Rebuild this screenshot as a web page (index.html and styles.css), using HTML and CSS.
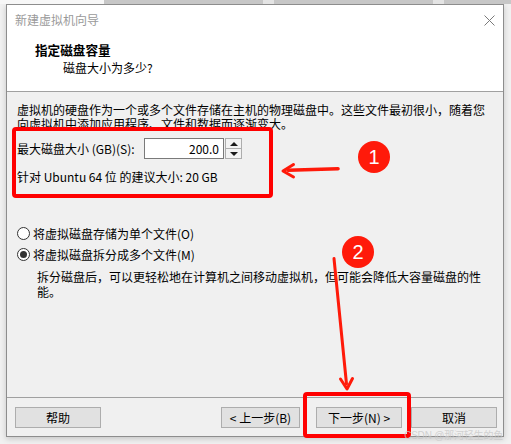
FILE: index.html
```html
<!DOCTYPE html>
<html lang="zh-CN">
<head>
<meta charset="utf-8">
<title>新建虚拟机向导</title>
<link rel="stylesheet" href="styles.css">
</head>
<body>
<div class="desktop">
  <span class="seg seg-white"></span>
  <span class="seg seg-gray w159"></span>
  <span class="seg seg-light"></span>
  <span class="seg seg-gray w159"></span>
  <span class="seg seg-light"></span>
  <span class="seg seg-gray grow"></span>
</div>
<div class="window">
  <div class="titlebar">
    <span class="title">新建虚拟机向导</span>
    <svg class="close" width="11" height="11" viewBox="0 0 11 11"><path d="M0.5 0.5L10.5 10.5M10.5 0.5L0.5 10.5" stroke="#7a7a7a" stroke-width="1" fill="none"/></svg>
  </div>
  <div class="header">
    <div class="h-title">指定磁盘容量</div>
    <div class="h-sub">磁盘大小为多少?</div>
  </div>
  <div class="content">
    <div class="intro">
      <div class="line">虚拟机的硬盘作为一个或多个文件存储在主机的物理磁盘中。这些文件最初很小，随着您</div>
      <div class="line">向虚拟机中添加应用程序、文件和数据而逐渐变大。</div>
    </div>
    <div class="size-row">
      <span class="size-label">最大磁盘大小 (GB)(S):</span>
      <div class="spin-field">200.0</div>
      <div class="spin-btns">
        <span class="spin-btn"><span class="tri-up"></span></span>
        <span class="spin-btn"><span class="tri-down"></span></span>
      </div>
    </div>
    <div class="recommend">针对 Ubuntu 64 位 的建议大小: 20 GB</div>
    <div class="radio-group">
      <div class="radio"><span class="radio-circle"></span><span>将虚拟磁盘存储为单个文件(O)</span></div>
      <div class="radio second"><span class="radio-circle checked"></span><span>将虚拟磁盘拆分成多个文件(M)</span></div>
      <div class="radio-desc">
        <div class="line2">拆分磁盘后，可以更轻松地在计算机之间移动虚拟机，但可能会降低大容量磁盘的性</div>
        <div class="line2">能。</div>
      </div>
    </div>
  </div>
  <div class="footer">
    <button class="btn btn-help">帮助</button>
    <button class="btn btn-back">&lt; 上一步(B)</button>
    <button class="btn btn-next">下一步(N) &gt;</button>
    <button class="btn btn-cancel">取消</button>
  </div>
</div>
<svg class="annot" width="511" height="444" viewBox="0 0 511 444">
  <rect x="14" y="129" width="257" height="67" rx="2" fill="none" stroke="#ff0000" stroke-width="4"/>
  <rect x="305" y="394" width="104" height="42" rx="2" fill="none" stroke="#ff0000" stroke-width="4"/>
  <path d="M338 168.8L288 170.3" stroke="#ff1a0a" stroke-width="3.6" stroke-linecap="round" fill="none"/>
  <path d="M293.5 164.5L283 171L293.5 177" stroke="#ff1a0a" stroke-width="3" stroke-linecap="round" stroke-linejoin="round" fill="none"/>
  <path d="M334 258.5L346.5 384" stroke="#ff1a0a" stroke-width="3" stroke-linecap="round" fill="none"/>
  <path d="M340.5 379L347 389L352.5 378.5" stroke="#ff1a0a" stroke-width="3" stroke-linecap="round" stroke-linejoin="round" fill="none"/>
  <circle cx="374" cy="157" r="16" fill="#ff1a0a"/>
  <text x="374" y="164" class="num">1</text>
  <circle cx="358" cy="252" r="16" fill="#ff1a0a"/>
  <text x="358" y="259" class="num">2</text>
</svg>
<div class="watermark">CSDN @那河轻生的鱼</div>
</body>
</html>
```
FILE: styles.css
```css
* { box-sizing: border-box; }
html, body { margin: 0; padding: 0; }
body {
  position: relative;
  width: 511px;
  height: 444px;
  overflow: hidden;
  background: #f1f1f1;
  font-family: "Noto Sans CJK SC", "Noto Sans", sans-serif;
  font-size: 12px;
  color: #000;
}
.desktop { display: flex; height: 4px; }
.seg { display: block; height: 4px; }
.seg-white { width: 104px; background: #f7f7f7; }
.seg-gray { background: #c7c7c7; }
.seg-light { width: 11px; background: #e4e4e4; }
.w159 { width: 159px; }
.grow { flex: 1; }

.window {
  width: 498px;
  height: 433px;
  margin-left: 6px;
  border: 1px solid #8d8d8d;
  background: #f0f0f0;
  display: flex;
  flex-direction: column;
  box-shadow: 0 2px 6px rgba(0,0,0,0.18);
}
.titlebar {
  height: 30px;
  background: #fff;
  display: flex;
  align-items: center;
  justify-content: space-between;
  padding: 0 8px 0 8px;
}
.title { color: #9a9a9a; line-height: 14px; }
.close { display: block; }

.header {
  height: 57px;
  background: #fff;
  border-bottom: 1px solid #a0a0a0;
  padding: 7px 0 0 28px;
}
.h-title { font-weight: 700; font-size: 12.6px; line-height: 16px; }
.h-sub { margin-top: 2px; padding-left: 28px; line-height: 16px; }

.content { flex: 1; padding: 11px 0 0 10px; }
.intro {
  font-family: "Liberation Sans", "Noto Sans CJK SC", sans-serif;
  padding-top: 1px;
  margin-bottom: -1px;
}
.intro .line { height: 14px; line-height: 14px; white-space: nowrap; }

.size-row { display: flex; align-items: center; margin-top: 7px; height: 21px; }
.size-label { width: 127px; white-space: nowrap; }
.spin-field {
  width: 80px;
  height: 21px;
  background: #fff;
  border: 1px solid #7a7a7a;
  text-align: right;
  padding-right: 4px;
  line-height: 19px;
}
.spin-btns {
  display: flex;
  flex-direction: column;
  width: 17px;
  height: 21px;
  margin-left: 1px;
  border: 1px solid #adadad;
  background: #f3f3f3;
}
.spin-btn {
  flex: 1;
  display: flex;
  align-items: center;
  justify-content: center;
}
.spin-btn + .spin-btn { border-top: 1px solid #adadad; }
.tri-up {
  width: 0; height: 0;
  border-left: 4px solid transparent;
  border-right: 4px solid transparent;
  border-bottom: 4px solid #1a1a1a;
}
.tri-down {
  width: 0; height: 0;
  border-left: 4px solid transparent;
  border-right: 4px solid transparent;
  border-top: 4px solid #1a1a1a;
}

.recommend { margin-top: 11px; line-height: 14px; white-space: nowrap; }

.radio-group { margin-top: 41px; }
.radio { display: flex; align-items: center; height: 16px; white-space: nowrap; }
.radio.second { margin-top: 5px; }
.radio-circle {
  width: 13px;
  height: 13px;
  border: 1px solid #333;
  border-radius: 50%;
  background: #fff;
  margin-right: 3px;
  display: flex;
  align-items: center;
  justify-content: center;
}
.radio-circle.checked::after {
  content: "";
  width: 7px;
  height: 7px;
  border-radius: 50%;
  background: #333;
}
.radio-desc {
  margin: 9px 0 0 20px;
  font-family: "Liberation Sans", "Noto Sans CJK SC", sans-serif;
}
.radio-desc .line2 { height: 15px; line-height: 15px; white-space: nowrap; }

.footer {
  height: 39px;
  border-top: 1px solid #a0a0a0;
  display: flex;
  align-items: flex-start;
  padding: 9px 6px 0 8px;
}
.btn {
  height: 21px;
  padding: 0;
  margin: 0;
  background: #e1e1e1;
  border: 1px solid #adadad;
  font-family: inherit;
  font-size: 12px;
  color: #000;
  line-height: 19px;
  text-align: center;
}
.btn-help { width: 86px; }
.btn-back { width: 79px; margin-left: auto; }
.btn-next { width: 86px; margin-left: 16px; }
.btn-cancel { width: 86px; margin-left: 9px; }

.annot { position: absolute; left: 0; top: 0; pointer-events: none; }
.num {
  fill: #fff;
  font-family: "Liberation Sans", Arial, sans-serif;
  font-size: 20px;
  text-anchor: middle;
}
.watermark {
  position: absolute;
  right: 8px;
  top: 429px;
  font-family: "Liberation Sans", "Noto Sans CJK SC", sans-serif;
  font-size: 10px;
  line-height: 13px;
  letter-spacing: -0.2px;
  color: rgba(200,200,200,0.8);
  white-space: nowrap;
}
```
